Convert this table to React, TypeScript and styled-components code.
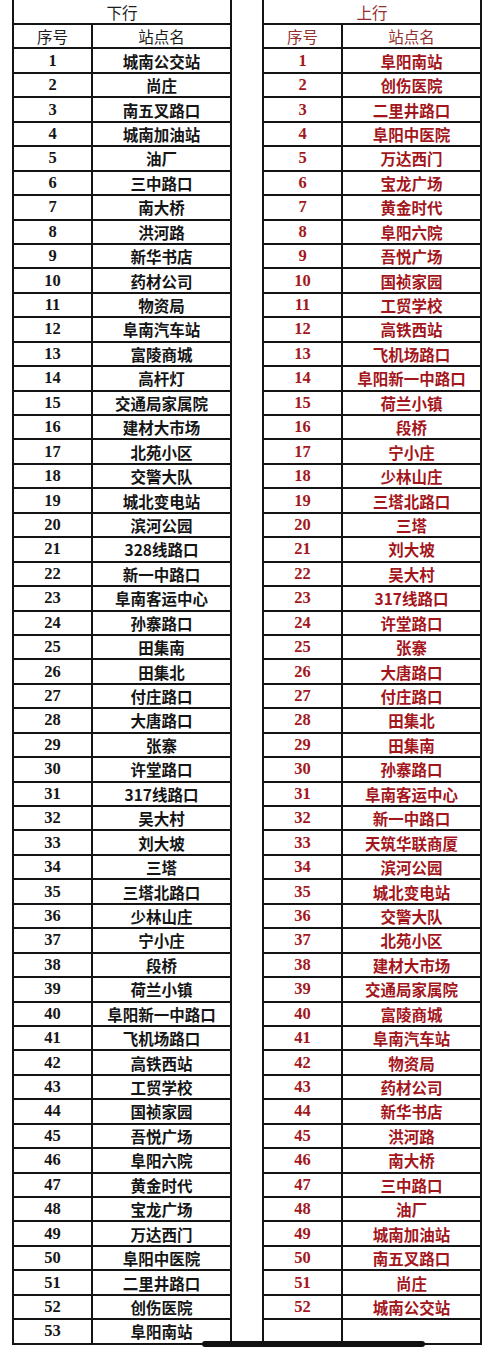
import styled, { createGlobalStyle } from "styled-components";

const GlobalStyle = createGlobalStyle`
  html, body {
    margin: 0;
    padding: 0;
    background: #fff;
  }
`;

type Tone = "black" | "red";

const tones = {
  black: { head: "#1c1c1c", text: "#151515" },
  red: { head: "#94302f", text: "#a3161c" },
};

const down = [
  "城南公交站", "尚庄", "南五叉路口", "城南加油站", "油厂", "三中路口", "南大桥", "洪河路",
  "新华书店", "药材公司", "物资局", "阜南汽车站", "富陵商城", "高杆灯", "交通局家属院",
  "建材大市场", "北苑小区", "交警大队", "城北变电站", "滨河公园", "328线路口", "新一中路口",
  "阜南客运中心", "孙寨路口", "田集南", "田集北", "付庄路口", "大唐路口", "张寨", "许堂路口",
  "317线路口", "吴大村", "刘大坡", "三塔", "三塔北路口", "少林山庄", "宁小庄", "段桥",
  "荷兰小镇", "阜阳新一中路口", "飞机场路口", "高铁西站", "工贸学校", "国祯家园", "吾悦广场",
  "阜阳六院", "黄金时代", "宝龙广场", "万达西门", "阜阳中医院", "二里井路口", "创伤医院",
  "阜阳南站",
];

const up = [
  "阜阳南站", "创伤医院", "二里井路口", "阜阳中医院", "万达西门", "宝龙广场", "黄金时代",
  "阜阳六院", "吾悦广场", "国祯家园", "工贸学校", "高铁西站", "飞机场路口", "阜阳新一中路口",
  "荷兰小镇", "段桥", "宁小庄", "少林山庄", "三塔北路口", "三塔", "刘大坡", "吴大村",
  "317线路口", "许堂路口", "张寨", "大唐路口", "付庄路口", "田集北", "田集南", "孙寨路口",
  "阜南客运中心", "新一中路口", "天筑华联商厦", "滨河公园", "城北变电站", "交警大队",
  "北苑小区", "建材大市场", "交通局家属院", "富陵商城", "阜南汽车站", "物资局", "药材公司",
  "新华书店", "洪河路", "南大桥", "三中路口", "油厂", "城南加油站", "南五叉路口", "尚庄",
  "城南公交站",
];

const Sheet = styled.div`
  position: relative;
  width: 500px;
  height: 1354px;
  overflow: hidden;
  background: #fff;
`;

const Board = styled.div`
  display: flex;
  gap: 30px;
  padding-left: 12px;
`;

const RouteTable = styled.div<{ $tone: Tone }>`
  display: grid;
  width: 220px;
  box-sizing: border-box;
  grid-template-columns: 77px 1fr;
  grid-template-rows: 23px;
  grid-auto-rows: 22.45px;
  gap: 2px;
  padding: 0 2px 2px 2px;
  background: #141414;
  color: ${({ $tone }) => tones[$tone].text};
`;

const Cell = styled.div`
  background: #fff;
  display: flex;
  align-items: center;
  justify-content: center;
  white-space: nowrap;
  overflow: hidden;
`;

const TitleCell = styled(Cell)<{ $tone: Tone }>`
  grid-column: 1 / -1;
  font-family: "Noto Sans CJK SC", "Noto Sans", sans-serif;
  font-size: 15.5px;
  font-weight: 400;
  color: ${({ $tone }) => tones[$tone].head};
`;

const HeadCell = styled(Cell)<{ $tone: Tone }>`
  font-family: "Noto Sans CJK SC", "Noto Sans", sans-serif;
  font-size: 15.5px;
  font-weight: 400;
  color: ${({ $tone }) => tones[$tone].head};
`;

const NumCell = styled(Cell)`
  font-family: "Liberation Serif", "Times New Roman", serif;
  font-size: 16.5px;
  font-weight: 700;
`;

const NameCell = styled(Cell)`
  font-family: "Noto Sans CJK SC", "Noto Sans", sans-serif;
  font-size: 15.5px;
  font-weight: 700;
`;

const HomeBar = styled.div`
  position: absolute;
  left: 202px;
  top: 1341px;
  width: 223px;
  height: 6px;
  border-radius: 3px;
  background: #111;
`;

function Row({ num, name }: { num: string; name: string }) {
  return (
    <>
      <NumCell>{num}</NumCell>
      <NameCell>{name}</NameCell>
    </>
  );
}

function Route({ title, tone, stops, rows }: { title: string; tone: Tone; stops: string[]; rows: number }) {
  const list = Array.from({ length: rows }, (_, i) => stops[i]);
  return (
    <RouteTable $tone={tone}>
      <TitleCell $tone={tone}>{title}</TitleCell>
      <HeadCell $tone={tone}>序号</HeadCell>
      <HeadCell $tone={tone}>站点名</HeadCell>
      {list.map((name, i) => (
        <Row key={i} num={name ? String(i + 1) : ""} name={name ?? ""} />
      ))}
    </RouteTable>
  );
}

export default function App() {
  return (
    <>
      <GlobalStyle />
      <Sheet>
        <Board>
          <Route title="下行" tone="black" stops={down} rows={53} />
          <Route title="上行" tone="red" stops={up} rows={53} />
        </Board>
        <HomeBar />
      </Sheet>
    </>
  );
}
